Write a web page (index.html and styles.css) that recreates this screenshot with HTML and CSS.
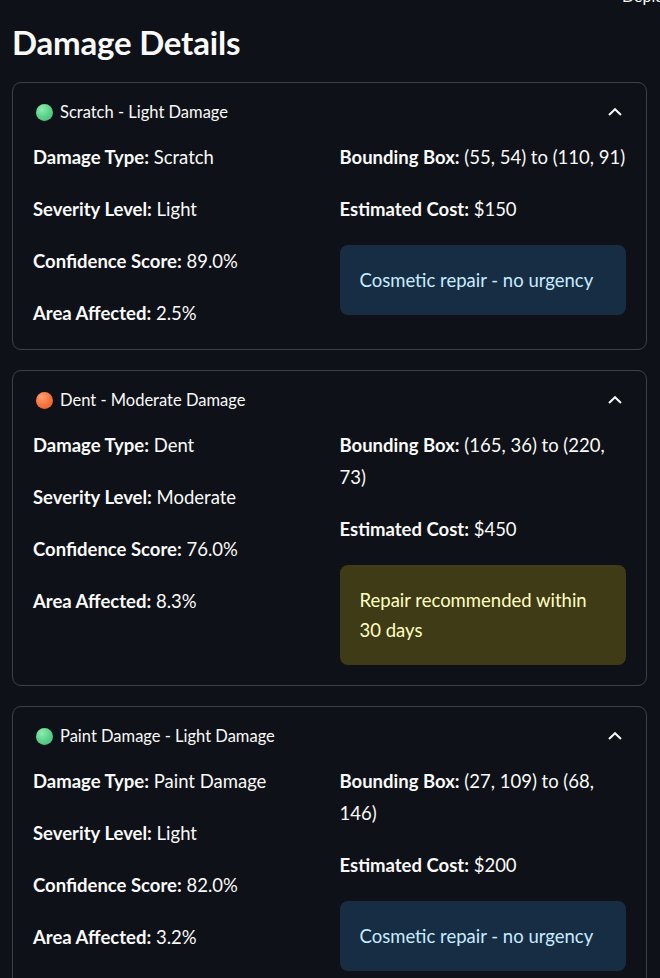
FILE: index.html
```html
<!DOCTYPE html>
<html lang="en">
<head>
<meta charset="utf-8">
<title>Damage Details</title>
<link rel="stylesheet" href="styles.css">
</head>
<body>
<div class="deploy">Deploy</div>
<main class="page">
  <h3 class="title">Damage Details</h3>

  <section class="card">
    <div class="summary">
      <span class="dot dot-green"></span>
      <span class="summary-text">Scratch - Light Damage</span>
      <svg class="chev" width="14" height="8" viewBox="0 0 14 8"><polyline points="1,7 7,1.2 13,7" fill="none" stroke="#fafafa" stroke-width="2"/></svg>
    </div>
    <div class="content">
      <div class="col">
        <p><b>Damage Type:</b> Scratch</p>
        <p><b>Severity Level:</b> Light</p>
        <p><b>Confidence Score:</b> 89.0%</p>
        <p><b>Area Affected:</b> 2.5%</p>
      </div>
      <div class="col">
        <p><b>Bounding Box:</b> (55, 54) to (110, 91)</p>
        <p><b>Estimated Cost:</b> $150</p>
        <div class="alert info">Cosmetic repair - no urgency</div>
      </div>
    </div>
  </section>

  <section class="card">
    <div class="summary">
      <span class="dot dot-orange"></span>
      <span class="summary-text">Dent - Moderate Damage</span>
      <svg class="chev" width="14" height="8" viewBox="0 0 14 8"><polyline points="1,7 7,1.2 13,7" fill="none" stroke="#fafafa" stroke-width="2"/></svg>
    </div>
    <div class="content">
      <div class="col">
        <p><b>Damage Type:</b> Dent</p>
        <p><b>Severity Level:</b> Moderate</p>
        <p><b>Confidence Score:</b> 76.0%</p>
        <p><b>Area Affected:</b> 8.3%</p>
      </div>
      <div class="col">
        <p><b>Bounding Box:</b> (165, 36) to (220, 73)</p>
        <p><b>Estimated Cost:</b> $450</p>
        <div class="alert warn">Repair recommended within 30 days</div>
      </div>
    </div>
  </section>

  <section class="card">
    <div class="summary">
      <span class="dot dot-green"></span>
      <span class="summary-text">Paint Damage - Light Damage</span>
      <svg class="chev" width="14" height="8" viewBox="0 0 14 8"><polyline points="1,7 7,1.2 13,7" fill="none" stroke="#fafafa" stroke-width="2"/></svg>
    </div>
    <div class="content">
      <div class="col">
        <p><b>Damage Type:</b> Paint Damage</p>
        <p><b>Severity Level:</b> Light</p>
        <p><b>Confidence Score:</b> 82.0%</p>
        <p><b>Area Affected:</b> 3.2%</p>
      </div>
      <div class="col">
        <p><b>Bounding Box:</b> (27, 109) to (68, 146)</p>
        <p><b>Estimated Cost:</b> $200</p>
        <div class="alert info">Cosmetic repair - no urgency</div>
      </div>
    </div>
  </section>
</main>
</body>
</html>
```

FILE: styles.css
```css
html, body {
  margin: 0;
  padding: 0;
  background: #0e1117;
  color: #fafafa;
  font-family: Lato, "Liberation Sans", sans-serif;
}

body {
  position: relative;
  overflow: hidden;
}

.deploy {
  position: absolute;
  top: -14px;
  left: 622px;
  font-size: 16px;
  line-height: 20px;
  color: #fafafa;
}

.page {
  padding: 21px 13px 40px 12px;
}

.title {
  margin: 0 0 19px 0;
  font-size: 33px;
  line-height: 42px;
  font-weight: 700;
  letter-spacing: -0.2px;
}

.card {
  border: 1px solid rgba(250, 250, 250, 0.2);
  border-radius: 9px;
  margin-bottom: 20px;
}

.summary {
  display: flex;
  align-items: center;
  height: 58px;
  padding: 0 24px 0 23px;
}

.dot {
  width: 17px;
  height: 17px;
  border-radius: 50%;
  margin-right: 7px;
  flex: none;
}

.dot-green {
  background: radial-gradient(circle at 35% 30%, #8eecb0 0%, #5fd48e 45%, #3fb872 100%);
}

.dot-orange {
  background: radial-gradient(circle at 35% 30%, #ffa070 0%, #f7743e 50%, #e55a28 100%);
}

.summary-text {
  flex: 1;
  font-size: 16.5px;
  line-height: 24px;
}

.chev {
  display: block;
  flex: none;
}

.content {
  display: grid;
  grid-template-columns: 1fr 1fr;
  column-gap: 20px;
  padding: 0 20px 20px 20px;
}

.col {
  display: flex;
  flex-direction: column;
  gap: 20px;
}

.col p {
  margin: 0;
  font-size: 18.5px;
  line-height: 32px;
}

.col b {
  font-weight: 700;
}

.alert {
  border-radius: 8px;
  padding: 19.5px 20px;
  font-size: 18.5px;
  line-height: 30.5px;
}

.info {
  background: #172d43;
  color: #c7ebff;
}

.warn {
  background: #3e3b16;
  color: #ffffc2;
}
```
